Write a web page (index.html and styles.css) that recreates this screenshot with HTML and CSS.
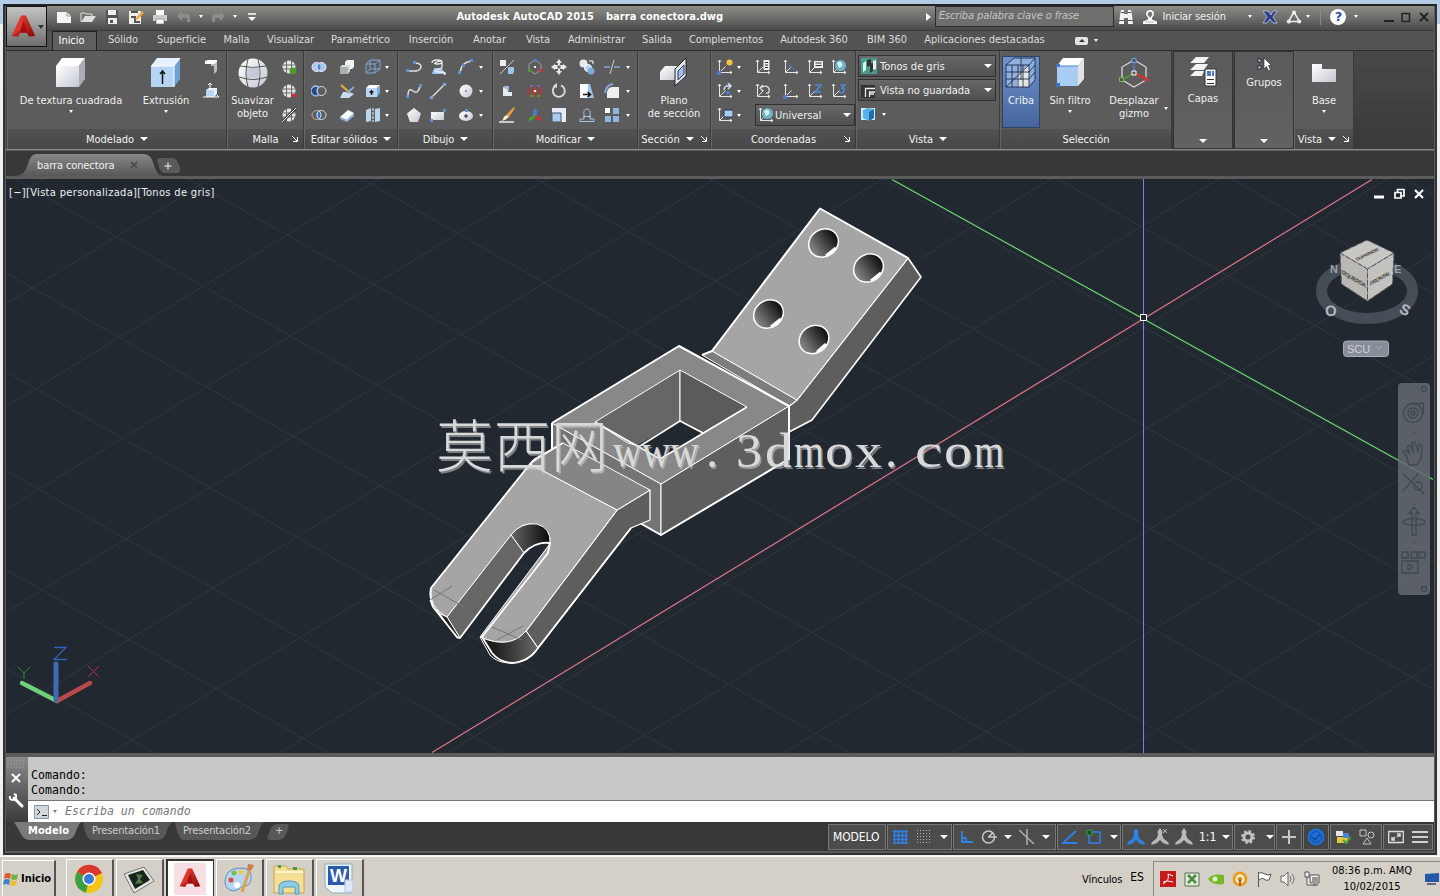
FILE: index.html
```html
<!DOCTYPE html>
<html lang="es">

<head>
  <meta charset="UTF-8">
  <title>Autodesk AutoCAD 2015 - barra conectora.dwg</title>
  <link rel="stylesheet" href="styles.css">
</head>

<body>
  <!-- shared symbols -->
  <svg class="defs" width="0" height="0">
    <defs>
      <linearGradient id="gWhite" x1="0" y1="0" x2="1" y2="1"><stop offset="0" stop-color="#fff"/><stop offset="1" stop-color="#c4c8d2"/></linearGradient>
      <linearGradient id="gRed" x1="0" y1="0" x2="1" y2="1"><stop offset="0" stop-color="#f0453a"/><stop offset="1" stop-color="#8d0a0a"/></linearGradient>
      <linearGradient id="gHole" x1="0" y1="0" x2="1" y2="0"><stop offset="0" stop-color="#8a8a8a"/><stop offset=".9" stop-color="#161616"/></linearGradient>
      <linearGradient id="gTip" x1="0" y1="0" x2="1" y2="0"><stop offset="0" stop-color="#111"/><stop offset=".3" stop-color="#222"/><stop offset="1" stop-color="#6a6a6a"/></linearGradient>
      <linearGradient id="gArc" x1="0" y1="0" x2="1" y2="0"><stop offset="0" stop-color="#666"/><stop offset="1" stop-color="#080808"/></linearGradient>
      <symbol id="ucs" viewBox="0 0 16 16"><path d="M2.500 1v12.500H15M2.500 13.500L8.500 7.500M1 3l1.500-2L4 3M13 12l2 1.500L13 15" fill="none" stroke="#e8e8e8"/></symbol>
      <symbol id="ball" viewBox="0 0 16 16"><circle cx="8" cy="8" r="6.500" fill="#e6e6e6"/><path d="M1.500 6h13M1.500 10h13M5.500 2v12M10.500 2v12" stroke="#6a6a6a" fill="none"/></symbol>
      <symbol id="logoA" viewBox="0 0 32 32"><path d="M13 2h6l12 26-8 1-3-5h-8l-3 5-8-1z" fill="url(#gRed)"/><path d="M16 9l5 15h-9z" fill="#a30f0f"/><path d="M13 2l3 7-5 12-10 7z" fill="#e83a33" opacity=".7"/></symbol>
      <symbol id="man" viewBox="0 0 18 18"><path d="M9 0l2.500 3.500L11 7l1.500 3.500 5 4v2.500l-5.500-2L9 12l-3 3-5.500 2v-2.500l5-4L7 7l-.5-3.500z"/></symbol>
    </defs>
  </svg>

  <div class="window">
    <div class="app-button"><svg width="25" height="27"><use href="#logoA"/></svg><i class="dd dark"></i></div>

    <div class="titlebar">
      <div class="quick">
        <svg class="ic" viewBox="0 0 16 16"><path d="M1 3h10l4 4v7H1z" fill="#f4f4f4"/><path d="M11 3v4h4" fill="none" stroke="#999"/></svg>
        <svg class="ic" viewBox="0 0 16 16"><path d="M1 13V4h4l1 1h6v2" fill="none" stroke="#ddd"/><path d="M1 13l4-6h11l-4 6z" fill="#ddd"/></svg>
        <svg class="ic" viewBox="0 0 16 16"><path d="M2 1h12v14H2z" fill="#555"/><path d="M4 1h8v5H4zM4 9h9v6H4z" fill="#eee"/><path d="M6 11h3v3H6z" fill="#555"/></svg>
        <svg class="ic" viewBox="0 0 16 16"><path d="M1 2h12v13H1z" fill="#eee"/><path d="M3 3h7M3 8h4v5h5" stroke="#555" stroke-width="2" fill="none"/><path d="M7 10l7-8 2 2-7 7z" fill="#f3a73c"/></svg>
        <svg class="ic" viewBox="0 0 16 16"><path d="M4 1h8v5H4z" fill="#fff"/><path d="M1 6h14v6H1z" fill="#ccc"/><path d="M4 10h8v5H4z" fill="#fff" stroke="#666" stroke-width=".6"/></svg>
        <svg class="ic" viewBox="0 0 16 16"><path d="M1 7l5-5v3h5q3 0 3 3v5h-3V9H6v3z" fill="#8c8c8c"/></svg>
        <i class="dd small"></i>
        <svg class="ic" viewBox="0 0 16 16"><path d="M15 7l-5-5v3H5Q2 5 2 8v5h3V9h5v3z" fill="#8c8c8c"/></svg>
        <i class="dd small"></i>
        <svg class="ic" viewBox="0 0 16 16"><path d="M4 5h8" stroke="#fff" stroke-width="1.500"/><path d="M4 8h8l-4 4z" fill="#fff"/></svg>
      </div>
      <div class="title"><span>Autodesk AutoCAD 2015</span><span>barra conectora.dwg</span></div>
      <i class="play"></i>
      <div class="search">Escriba palabra clave o frase</div>
      <div class="info">
        <svg class="ic" viewBox="0 0 16 16"><path d="M2 6l1-5h3v4h4V1h3l1 5 1 9h-5V9H6v6H1z" fill="#f2f2f2"/><path d="M1 11.500h5M10 11.500h5M3 3.500h3M10 3.500h3" stroke="#555"/></svg>
        <svg class="ic" viewBox="0 0 16 16"><path d="M8 1q4 0 4 4.500L10 9v1.500l5 2V15H1v-2.500l5-2V9L4 5.500Q4 1 8 1z" fill="#fff"/><path d="M8 3q2.500 0 2 3L8 8.500 6 6q-.5-3 2-3zM4 13h8" fill="#777" stroke="#777" stroke-width=".6"/></svg>
        <span>Iniciar sesión</span>
        <i class="dd small"></i>
        <svg class="ic" viewBox="0 0 16 16"><path d="M1 2h5l3 4 2-4h4l-4 6 4 6h-4l-3-4-3 4H1l4-6z" fill="#2d3f86" stroke="#bcc6ee" stroke-width=".8"/></svg>
        <svg class="ic tri" viewBox="0 0 16 16"><path d="M8 3L2.500 12.500h11z" fill="none" stroke="#eee" stroke-width="1.500"/><circle cx="8" cy="3.500" r="2" fill="#eee"/><circle cx="2.800" cy="12.500" r="2" fill="#eee"/><circle cx="13.200" cy="12.500" r="2" fill="#eee"/></svg>
        <i class="dd small"></i>
        <b class="bar"></b>
        <span class="help">?</span>
        <i class="dd small"></i>
      </div>
      <svg class="winbtns" width="52" height="16" viewBox="0 0 52 16"><path d="M2 12h10" stroke="#222" stroke-width="2"/><path d="M20 4v8.500h7.500V4.500H20" fill="none" stroke="#222" stroke-width="1.500"/><path d="M38 4l8 8M46 4l-8 8" stroke="#222" stroke-width="2"/></svg>
    </div>

    <div class="tabs">
      <span class="active">Inicio</span><span>Sólido</span><span>Superficie</span><span>Malla</span><span>Visualizar</span><span>Paramétrico</span><span>Inserción</span><span>Anotar</span><span>Vista</span><span>Administrar</span><span>Salida</span><span>Complementos</span><span>Autodesk 360</span><span>BIM 360</span><span>Aplicaciones destacadas</span>
      <span class="mini"><b></b><i class="dd small"></i></span>
    </div>

    <div class="ribbon">
      <section class="panel p-modelado">
        <div class="body">
          <div class="big wide"><svg width="32" height="32"><path d="M1 9l6-8h23l-6 8z" fill="#fff"/><path d="M1 9h23v21H1z" fill="url(#gWhite)"/><path d="M24 9l6-8v21l-6 8z" fill="#a9adb8"/></svg><span>De textura cuadrada</span><i class="dd small"></i></div>
          <div class="big ext"><svg width="32" height="32"><path d="M1 9l6-8h23l-6 8z" fill="#e6f2ff"/><path d="M1 9h23v21H1z" fill="#b6d5f5"/><path d="M24 9l6-8v21l-6 8z" fill="#6fa1d6"/><path d="M1 9h23v21M24 9l6-8" fill="none" stroke="#fff"/><path d="M12.500 27V14M10 17l2.500-3 2.500 3" fill="none" stroke="#111" stroke-width="1.500"/></svg><span>Extrusión</span><i class="dd small"></i></div>
          <div class="tools c1">
            <svg class="ic" viewBox="0 0 16 16"><path d="M2 2l3-1h9v2l-2 2H2z" fill="#fff"/><path d="M8 5h4l2-2v9l-3 3V7H8z" fill="#bdbdbd"/></svg>
            <svg class="ic" viewBox="0 0 16 16"><path d="M3 7h8v7H3z" fill="#b9d6f5"/><path d="M3 7l3-2h8l-3 2zM11 7l3-2v6l-3 3z" fill="#e9f3ff"/><path d="M7 6V0M5 2l2-2 2 2M0 14h16M14 12l2 2" stroke="#fff" fill="none"/></svg>
          </div>
        </div>
        <h3>Modelado <i class="dd"></i></h3>
      </section>

      <section class="panel p-malla">
        <div class="body">
          <div class="big sua"><svg width="32" height="32"><circle cx="16" cy="16" r="14.500" fill="url(#gWhite)"/><path d="M3 9q13 3 26 0M2 20q14 5 28 0M11 2q-4 14 0 28M21 2q4 14 0 28" fill="none" stroke="#555"/><path d="M10 10.500h13v10H10z" fill="#aab4c6" opacity=".5"/></svg><span>Suavizar<br>objeto</span></div>
          <div class="tools c1">
            <svg class="ic" viewBox="0 0 16 16"><use href="#ball"/><circle cx="12" cy="12" r="3.500" fill="#4d9b2c"/></svg>
            <svg class="ic" viewBox="0 0 16 16"><use href="#ball"/><path d="M10 11h6v3h-6z" fill="#b23a3a"/></svg>
            <svg class="ic" viewBox="0 0 16 16"><use href="#ball"/><path d="M1 15L15 1" stroke="#444" stroke-width="3"/><path d="M1 15L15 1" stroke="#eee"/></svg>
          </div>
        </div>
        <h3>Malla <svg class="launch" viewBox="0 0 8 8"><path d="M1 1l5 5M6.500 2v4.500H2" fill="none" stroke="#fff"/></svg></h3>
      </section>

      <section class="panel p-editar">
        <div class="body">
          <div class="tools">
            <svg class="ic" viewBox="0 0 16 16"><circle cx="5.500" cy="8" r="4.500" fill="#a8c8ee" stroke="#eef"/><circle cx="10.500" cy="8" r="4.500" fill="#a8c8ee" stroke="#eef"/><path d="M8 4.500q3 3.500 0 7-3-3.500 0-7" fill="#5a87c4"/></svg>
            <svg class="ic" viewBox="0 0 16 16"><path d="M6 3l2-2h7v7l-2 2H6z" fill="#f3f3f3"/><path d="M1 8h8v7H1z" fill="#a9b0ac"/><path d="M1 8l2-2h8L9 8zM9 8l2-2v6l-2 3z" fill="#d8dcd9"/></svg>
            <svg class="ic" viewBox="0 0 16 16"><path d="M1 5h9v9H1zM5 1h10v9H5zM1 5l4-4M10 5l5-4M10 14l5-4M1 14l4-4" fill="none" stroke="#7fa5d6"/></svg>
            <i class="dd small"></i>
            <svg class="ic" viewBox="0 0 16 16"><circle cx="10.500" cy="8" r="4.500" fill="none" stroke="#ddd"/><path d="M7.500 4a4.800 4.800 0 1 0 0 8q-3-4 0-8z" fill="#284a80" stroke="#9fc3f0" stroke-width="1.300"/></svg>
            <svg class="ic" viewBox="0 0 16 16"><path d="M1 15l3-6h6l5 2-5 4z" fill="#c7dbf2"/><path d="M2 2l9 8" stroke="#f0a83a" stroke-width="2"/><path d="M8 10l7-6" stroke="#7faadc" stroke-width="2"/></svg>
            <svg class="ic" viewBox="0 0 16 16"><path d="M1 5l3-3h11l-3 3z" fill="#fff"/><path d="M1 5h11v9H1z" fill="#b9d6f5"/><path d="M12 5l3-3v8l-3 4z" fill="#7faadc"/><path d="M6.500 12V7M4.500 9h4" stroke="#111" stroke-width="1.500"/></svg>
            <i class="dd small"></i>
            <svg class="ic" viewBox="0 0 16 16"><circle cx="5.500" cy="8" r="4.500" fill="none" stroke="#c9a89a"/><circle cx="10.500" cy="8" r="4.500" fill="none" stroke="#cdd"/><path d="M8 3.500q4 4.500 0 9-4-4.500 0-9" fill="#3f71b8" stroke="#bcd8f8"/></svg>
            <svg class="ic" viewBox="0 0 16 16"><path d="M1 10l8-7 6 3-7 7z" fill="#fff"/><path d="M1 10l7 3 7-7v3l-7 6-7-3z" fill="#8fb5e2"/></svg>
            <svg class="ic" viewBox="0 0 16 16"><path d="M1 3l5-2v13l-5 1zM10 2l5-1v13l-5 1z" fill="#b9d6f5"/><path d="M8 1v14" stroke="#fff" stroke-dasharray="3 1"/></svg>
            <i class="dd small"></i>
          </div>
        </div>
        <h3>Editar sólidos <i class="dd"></i></h3>
      </section>

      <section class="panel p-dibujo">
        <div class="body">
          <div class="tools">
            <svg class="ic" viewBox="0 0 16 16"><path d="M1 12h9q5-1 5-4.500T8 4" fill="none" stroke="#ddd" stroke-width="1.500"/><path d="M0 10h3v3H0zM7 2h3v3H7z" fill="#5c8fd6"/></svg>
            <svg class="ic" viewBox="0 0 16 16"><path d="M4 9h8l3 6H2z" fill="#9cc4ee"/><path d="M2 4q0-3 5-3t5 2-5 2 0-2 5 1 0 4-5 3 3 2 4 3" fill="none" stroke="#eee" stroke-width="1.300"/></svg>
            <svg class="ic" viewBox="0 0 16 16"><path d="M2 14Q3 3 14 2" fill="none" stroke="#ddd" stroke-width="1.500"/><path d="M0 12h3v3H0zM4 5h3v3H4zM12 0h3v3h-3z" fill="#5c8fd6"/></svg>
            <i class="dd small"></i>
            <svg class="ic" viewBox="0 0 16 16"><path d="M2 13Q2 4 7 8t7-5" fill="none" stroke="#ddd" stroke-width="1.500"/><path d="M0 12h3v3H0zM13 1h3v3h-3z" fill="#5c8fd6"/></svg>
            <svg class="ic" viewBox="0 0 16 16"><path d="M2 14L14 2" stroke="#ddd" stroke-width="1.500"/><path d="M0 13h3v3H0zM13 0h3v3h-3z" fill="#7fa5d6"/></svg>
            <svg class="ic" viewBox="0 0 16 16"><circle cx="8" cy="8" r="6.500" fill="url(#gWhite)"/><path d="M7 7h2v2H7z" fill="#99a"/></svg>
            <i class="dd small"></i>
            <svg class="ic" viewBox="0 0 16 16"><path d="M8 1l7 5.500L12 15H4L1 6.500z" fill="url(#gWhite)"/></svg>
            <svg class="ic" viewBox="0 0 16 16"><path d="M1 5h13v8H1z" fill="url(#gWhite)"/><path d="M0 12h3v3H0zM13 2h3v3h-3z" fill="#5c8fd6"/></svg>
            <svg class="ic" viewBox="0 0 16 16"><ellipse cx="8" cy="9" rx="7" ry="5" fill="url(#gWhite)"/><path d="M8 7v4M6 9h4" stroke="#223"/><path d="M7 2h3v3H7z" fill="#5c8fd6"/></svg>
            <i class="dd small"></i>
          </div>
        </div>
        <h3>Dibujo <i class="dd"></i></h3>
      </section>

      <section class="panel p-modificar">
        <div class="body">
          <div class="tools">
            <svg class="ic" viewBox="0 0 16 16"><path d="M1 1h6v6H1z" fill="#eee"/><path d="M9 9l1-1h5v5l-1 2H9z" fill="#9cc4ee"/><path d="M1 15L15 1" stroke="#ccc"/></svg>
            <svg class="ic" viewBox="0 0 16 16"><path d="M8 1l6 4v6l-6 4-6-4V5z" fill="none" stroke="#9a9a9a"/><path d="M6.500 0h3v3h-3z" fill="#4a7cd0"/><path d="M1 10h3v3H1z" fill="#4d9b2c"/><path d="M12 10h3v3h-3z" fill="#d33"/><path d="M7 7h2v2H7z" fill="#eee"/></svg>
            <svg class="ic" viewBox="0 0 16 16"><path d="M8 0l3 4H9v2h3V5l4 3-4 3v-1H9v2h2l-3 4-3-4h2v-2H4v1L0 8l4-3v1h3V4H5z" fill="#e8e8e8"/><path d="M6.500 6.500h3v3h-3z" fill="#666"/></svg>
            <svg class="ic" viewBox="0 0 16 16"><circle cx="4.500" cy="4.500" r="4" fill="#e8e8e8"/><circle cx="9" cy="9" r="3.500" fill="#b9d6f5" stroke="#fff"/><circle cx="12" cy="12" r="3.500" fill="#7faadc"/><path d="M10 2h4v3" fill="none" stroke="#fff"/></svg>
            <svg class="ic" viewBox="0 0 16 16"><path d="M0 8h6M10 8h6" stroke="#7fa5d6" stroke-width="1.500"/><path d="M6 15l4-14" stroke="#ccc"/></svg>
            <i class="dd small"></i>
            <svg class="ic" viewBox="0 0 16 16"><path d="M4 4h5v5h4v4H4z" fill="#e4e9f0"/><path d="M4 4l2-1h4v5" fill="#9cb8dc"/></svg>
            <svg class="ic" viewBox="0 0 16 16"><ellipse cx="8" cy="8" rx="7" ry="5" fill="none" stroke="#b33" stroke-width="1.500"/><path d="M3 3h3M10 3h3" stroke="#4a7cd0" stroke-width="2"/><path d="M3 13h4M10 13h3" stroke="#4d9b2c" stroke-width="2"/><circle cx="8" cy="8" r="2.500" fill="#d33"/><path d="M7 7h2v2H7z" fill="#fff"/></svg>
            <svg class="ic" viewBox="0 0 16 16"><path d="M10 2.300A6 6 0 1 1 5 2.600" fill="none" stroke="#ddd" stroke-width="1.800"/><path d="M6 0v5L2 3z" fill="#ddd"/></svg>
            <svg class="ic" viewBox="0 0 16 16"><path d="M1 1h8v14H1z" fill="#fff"/><path d="M9 1h2l4 14H9z" fill="#9cc4ee"/><path d="M4 11.500h7M8.500 9l3 2.500-3 2.500" stroke="#111" fill="none" stroke-width="1.500"/></svg>
            <svg class="ic" viewBox="0 0 16 16"><path d="M3 15V9q1-5 6-5h6v11z" fill="#eee"/><path d="M1 10Q2 2 9 1" fill="none" stroke="#7faadc" stroke-width="2"/></svg>
            <i class="dd small"></i>
            <svg class="ic" viewBox="0 0 16 16"><path d="M15 0l1 1-6 9-3-2z" fill="#e9a13a"/><path d="M7 8l3 2-4 3-4 1q2-1 3-4z" fill="#fff3cf"/><path d="M0 15h15" stroke="#eee" stroke-width="1.500"/></svg>
            <svg class="ic" viewBox="0 0 16 16"><path d="M8 1l2 3v5H6V4z" fill="#4a7cd0"/><path d="M7 8l1 3-3 2-4 1 1-3z" fill="#4d9b2c"/><path d="M9 8l-1 3 3 2 4 1-1-3z" fill="#c33"/></svg>
            <svg class="ic" viewBox="0 0 16 16"><path d="M1 1h14v14H1z" fill="#e4ecf7"/><path d="M1 6h9v9H1z" fill="#a9c9ee" stroke="#456"/></svg>
            <svg class="ic" viewBox="0 0 16 16"><path d="M1 14.500h14V12h-4V8q1-6-3-6T5 8v4H1zM4 9.500h8" fill="none" stroke="#a8c3e6"/></svg>
            <svg class="ic" viewBox="0 0 16 16"><path d="M1 1h5v5H1z" fill="#fff"/><path d="M9 1h6v6H9zM1 9h6v6H1zM9 9h6v6H9z" fill="#8fb5e2"/></svg>
            <i class="dd small"></i>
          </div>
        </div>
        <h3>Modificar <i class="dd"></i></h3>
      </section>

      <section class="panel p-seccion">
        <div class="body">
          <div class="big"><svg width="32" height="32"><path d="M2 15l5-6h13l-2 14H2z" fill="url(#gWhite)"/><path d="M17 12L28 1v18L17 29z" fill="#dfe6ef" stroke="#222"/><path d="M20 14l6-6v9l-6 6z" fill="#9fc0e8" stroke="#335"/></svg><span>Plano<br>de sección</span></div>
        </div>
        <h3>Sección <i class="dd"></i><svg class="launch" viewBox="0 0 8 8"><path d="M1 1l5 5M6.500 2v4.500H2" fill="none" stroke="#fff"/></svg></h3>
      </section>

      <section class="panel p-coord">
        <div class="body">
          <div class="tools">
            <svg class="ic" viewBox="0 0 16 16"><use href="#ucs"/><circle cx="12.500" cy="3.500" r="3" fill="#f8c34a"/><path d="M0 12h4v4H0z" fill="#4a7cd0"/></svg>
            <i class="dd small"></i>
            <svg class="ic" viewBox="0 0 16 16"><use href="#ucs"/><path d="M8.500 1h6v10h-6z" fill="#eee"/><path d="M10 3.500h3M10 6h3M10 8.500h3" stroke="#333"/></svg>
            <svg class="ic" viewBox="0 0 16 16"><use href="#ucs"/><path d="M4 4l8 8" stroke="#4a6ca8" stroke-width="1.500"/></svg>
            <svg class="ic" viewBox="0 0 16 16"><use href="#ucs"/><path d="M7 2h9v7H7z" fill="#eee"/><path d="M8.500 4h6M8.500 6.500h6" stroke="#333"/></svg>
            <svg class="ic" viewBox="0 0 16 16"><use href="#ucs"/><circle cx="9.500" cy="6.500" r="5.500" fill="#6fb3c4"/><path d="M6 4q3-3 5 0t-3 5z" fill="#d6f2f2"/></svg>
            <svg class="ic" viewBox="0 0 16 16"><use href="#ucs"/><path d="M7 7q0-5 6-4M11 0l3 3-3 3" fill="none" stroke="#cfe0f5" stroke-width="1.500"/><circle cx="11" cy="10" r="2" fill="#4a7cd0"/></svg>
            <i class="dd small"></i>
            <svg class="ic" viewBox="0 0 16 16"><use href="#ucs"/><path d="M5 5q8-4 9 1t-3 4M8 2L5 5l3 3" fill="none" stroke="#ddd" stroke-width="1.300"/></svg>
            <svg class="ic" viewBox="0 0 16 16"><use href="#ucs"/><path d="M0 12h4v4H0z" fill="#4a7cd0"/></svg>
            <svg class="ic" viewBox="0 0 16 16"><use href="#ucs"/><path d="M8 2h6L8 9h6" fill="none" stroke="#4f86d8" stroke-width="1.600"/></svg>
            <svg class="ic" viewBox="0 0 16 16"><use href="#ucs"/><path d="M9 2h5L11 5q3 0 2 3t-5 1" fill="none" stroke="#4f86d8" stroke-width="1.600"/></svg>
            <svg class="ic" viewBox="0 0 16 16"><use href="#ucs"/><path d="M7 3h9v7H7z" fill="#a9c9ee" stroke="#234"/></svg>
            <i class="dd small"></i>
            <div class="combo uni"><svg class="ic" viewBox="0 0 16 16"><use href="#ucs"/><circle cx="9.500" cy="6.500" r="5.500" fill="#6fb3c4"/><path d="M6 4q3-3 5 0t-3 5z" fill="#d6f2f2"/></svg><span>Universal</span><i class="dd"></i></div>
          </div>
        </div>
        <h3>Coordenadas <svg class="launch" viewBox="0 0 8 8"><path d="M1 1l5 5M6.500 2v4.500H2" fill="none" stroke="#fff"/></svg></h3>
      </section>

      <section class="panel p-vista">
        <div class="body col">
          <div class="combo"><svg class="ic" viewBox="0 0 16 16"><path d="M0 0h16v16H0z" fill="#4b9c8c"/><path d="M2 5l3-2v9l-3 2z" fill="#cfe"/><path d="M6 2l4-1v6l-4 2zM9 6l4-2v8l-4 3z" fill="#333"/><path d="M12 3l3-1v9l-3 1z" fill="#eee"/></svg><span>Tonos de gris</span><i class="dd"></i></div>
          <div class="combo"><svg class="ic" viewBox="0 0 16 16"><path d="M0 3h14v13H0z" fill="#333"/><path d="M4.500 15V6.500H14M8.500 15v-5H14M8.500 12H13" fill="none" stroke="#eee" stroke-width="1.300"/></svg><span>Vista no guardada</span><i class="dd"></i></div>
          <div class="cubeline"><svg class="ic" viewBox="0 0 16 16"><path d="M0 2h14v12H0z" fill="#d3ecfb"/><path d="M2 4l5-2 6 1v9l-5 3-6-3z" fill="#58b2e8"/><path d="M8 6l5-3v9l-5 3z" fill="#1f6fae"/></svg><i class="dd small"></i></div>
        </div>
        <h3>Vista <i class="dd"></i></h3>
      </section>

      <section class="panel p-seleccion">
        <div class="body">
          <div class="big criba"><svg width="32" height="32"><path d="M1 8l8-7h21v22l-6 7H1z" fill="#8fb0dc"/><path d="M12 17l12-9v22H12z" fill="#e5e5e5"/><path d="M1 8h23v22H1zM9 1h21v22M24 8l6-7M24 30l6-7M1 8l8-7M1 15h23l6-7M1 22h23l6-7M7 8v22M13 8v22M18 8v22M16 1v22M1 30L24 8" fill="none" stroke="#10203c" stroke-width=".8"/></svg><span>Criba</span></div>
          <div class="big filtro"><svg width="32" height="32"><path d="M3 9l6-8h21l-6 8z" fill="#fff"/><path d="M3 9h21v20H3z" fill="#a9cdf2"/><path d="M24 9l6-8v21l-6 7z" fill="#e3e3e3"/><path d="M2 26h4v4H2zM2 7h4v3H2z" fill="#3c74c4"/><path d="M4 9h20" stroke="#4a86cf"/></svg><span>Sin filtro</span><i class="dd small"></i></div>
          <div class="big gizmo"><svg width="32" height="32"><path d="M16 3l12 7v13l-12 7-12-7V10z" fill="none" stroke="#d8d8d8" stroke-width="1.300"/><path d="M16 16V4" stroke="#4a7cd0" stroke-width="1.500"/><path d="M16 16L4 23" stroke="#4d9b2c" stroke-width="2"/><path d="M16 16l12 6" stroke="#c33" stroke-width="2"/><path d="M14 1.500h4v4h-4z" fill="#555" stroke="#6aa0ee"/><path d="M1.500 20.500h4v4h-4z" fill="#555" stroke="#6ac040"/><path d="M27 19l5 5h-6z" fill="#d33"/><path d="M14 14h4v4h-4z" fill="#555" stroke="#fff"/></svg><span>Desplazar<br>gizmo</span></div>
          <i class="dd small giz"></i>
        </div>
        <h3>Selección</h3>
      </section>

      <section class="panel shut p-capas">
        <svg width="32" height="32"><path d="M9 1h13l-5 6H3zM9 8h12l-4 6H3zM8 15h9l-2 5H3z" fill="#f2f2f2"/><path d="M18 13h11v17H18z" fill="#fff" stroke="#333"/><path d="M20 15h4v5h-4zM25 15h2v5h-2z" fill="#4a7cd0"/><path d="M20 23.500h7M20 27.500h7" stroke="#333"/></svg><span>Capas</span><i class="dd"></i>
      </section>
      <section class="panel shut p-grupos">
        <svg class="ic" viewBox="0 0 16 16"><path d="M2 3h3v3H2zM2 10h3v3H2z" fill="#e3e8f2" stroke="#223"/><path d="M8 2v11l2.500-2.500 2 4.500 2-1-2-4.500h3z" fill="#fff" stroke="#222" stroke-width=".6"/></svg><span>Grupos</span><i class="dd"></i>
      </section>
      <section class="panel p-base">
        <div class="body">
          <div class="big"><svg width="32" height="32"><path d="M4 7h10v5h14v13H4z" fill="url(#gWhite)"/></svg><span>Base</span><i class="dd small"></i></div>
        </div>
        <h3>Vista <i class="dd"></i><svg class="launch" viewBox="0 0 8 8"><path d="M1 1l5 5M6.500 2v4.500H2" fill="none" stroke="#fff"/></svg></h3>
      </section>
    </div>

    <div class="filetabs">
      <svg width="240" height="25"><defs><linearGradient id="gTab" x1="0" y1="0" x2="0" y2="1"><stop offset="0" stop-color="#888"/><stop offset="1" stop-color="#585858"/></linearGradient></defs><path d="M10 25q9-1 12-12t9-10h107q7 0 10 11t9 11z" fill="url(#gTab)"/><path d="M151 9q0-2 3-2h13q4 0 7 10 1 5-3 5h-13q-4 0-7-13z" fill="#5a5a5a"/><path d="M158.500 15h7M162 11.500v7" stroke="#ccc" stroke-width="1.500"/><path d="M125 11l6 6M131 11l-6 6" stroke="#505050" stroke-width="2"/></svg>
      <span>barra conectora</span>
    </div>

    <div class="viewport">
      <svg class="scene" width="1427" height="574" viewBox="6 179 1427 574">
        <g id="grid" stroke="#2e3742" stroke-width="1"></g>
        <path d="M892 179.500L1433 479.500" stroke="#1d4a2c" stroke-width="2.500"/>
        <path d="M892 179.500L1433 479.500" stroke="#8fe08c"/>
        <path d="M1372 179.500L432 752.500" stroke="#5e2f3d" stroke-width="2"/>
        <path d="M1372 179.500L432 752.500" stroke="#e08c98"/>
        <path d="M1143 179h1v574h-1z" fill="#7a7cf0"/>
        <path d="M1140.500 314.500h6v6h-6z" fill="#212830" stroke="#fff"/>

        <!-- upper plate -->
        <g stroke="#fff" stroke-linejoin="round">
          <path d="M797 400L908 258l13 19-109 143-23 12V406z" fill="#5e5e5e" stroke-width="1.600"/>
          <path d="M702 355l10-4 85 49-8 6z" fill="#7d7d7d"/>
          <path d="M820 208.500l88 49.500-111 142-85-49z" fill="#a5a5a5"/>
          <path d="M702 355l10-4 108-142.500 88 49.500" fill="none" stroke-width="2"/>
          <g fill="url(#gHole)" stroke-width="1.500">
            <ellipse cx="823.500" cy="243" rx="15.500" ry="13.500" transform="rotate(-35 823.500 243)"/>
            <ellipse cx="868.500" cy="268" rx="15.500" ry="13.500" transform="rotate(-35 868.500 268)"/>
            <ellipse cx="768.500" cy="314" rx="15.500" ry="13.500" transform="rotate(-35 768.500 314)"/>
            <ellipse cx="814" cy="339.500" rx="15.500" ry="13.500" transform="rotate(-35 814 339.500)"/>
          </g>
          <path d="M826 256l10-8M871 281l10-8M771 327l10-8M817 352l9-8" stroke-width="3"/>
        </g>

        <!-- centre frame -->
        <g stroke="#fff" stroke-linejoin="round">
          <path d="M552 423l109 61v51l-109-60z" fill="#747474"/>
          <path d="M661 484l128-78v53l-128 76z" fill="#5e5e5e"/>
          <path d="M552 423l127-77 110 60-128 78z" fill="#888"/>
          <path d="M595 422l85-52v51l-40 25-12-3z" fill="#666"/>
          <path d="M680 370l67 37-44 26-23-12z" fill="#5b5b5b"/>
          <path d="M636 446l44-25 23 12-43 27z" fill="#212830" stroke="none"/>
          <path d="M640 446l40-25 23 12M595 422l65 37 87-52" fill="none" stroke-width="1.600"/>
          <path d="M552 423l127-77 110 60v53l-128 76-21-12M552 423v30" fill="none" stroke-width="2"/>
        </g>

        <!-- forked arm -->
        <g stroke="#fff" stroke-linejoin="round">
          <path d="M617 510l33-20v30l-19 8-93 120-12-17z" fill="#5e5e5e" stroke-width="1.300"/>
          <path d="M530 464l33-21 87 47-33 20z" fill="#858585"/>
          <path d="M530 464l87 46-91 121q-16 19-46 6l69-92q4-14-10-20-17-5-28 10l-64 82q-19-10-16-29z" fill="#a5a5a5"/>
          <path d="M511 535q10-13 26-11 14 4 13 19-14-2-26 10z" fill="url(#gArc)"/>
          <path d="M447 617l64-82 13 18-64 85z" fill="#666"/>
          <path d="M430 600q3 12 17 17l13 21h-3z" fill="#222"/>
          <path d="M480 637q30 13 46-6l12 17q-12 16-30 15-12-1-18-8z" fill="url(#gTip)"/>
          <path d="M563 443l-28 16-5 5-99 124q-2 9 2 19l24 30 3 1 64-85q12-12 26-10l-2 10-66 84 10 16q7 9 20 10 17-1 26-15l93-120" fill="none" stroke-width="1.800"/>
        </g>
        <path d="M434 590l30 17M430 600l22-14M492 627l30 13M497 640l26-14" stroke="#777" fill="none"/>

        <!-- ucs tripod -->
        <g stroke-linecap="round" stroke-width="4.500">
          <path d="M57 701L22 683" stroke="#6fd07a"/>
          <path d="M57 701l33-18" stroke="#b8494d"/>
          <path d="M56 700v-36" stroke="#3f6bb5" stroke-width="5"/>
        </g>
        <path d="M18 667l6 6 6-6M24 673v6" fill="none" stroke="#2f8b3c"/>
        <path d="M88 666l11 11M99 666l-11 11" stroke="#b03040"/>
        <path d="M54 647.500h12L54 659.500h13" fill="none" stroke="#2f62b8" stroke-width="1.300"/>

        <!-- view cube -->
        <ellipse cx="1367" cy="291" rx="45.500" ry="27.500" fill="none" stroke="#454d57" stroke-width="11"/>
        <g class="compass"><text x="1325" y="316" transform="rotate(-5 1331 310)">O</text><text x="1400" y="315" transform="rotate(28 1405 310)">S</text><text x="1330" y="273" class="far">N</text><text x="1394" y="273" class="far">E</text></g>
        <g stroke="#555" stroke-dasharray="5 2">
          <path d="M1340 253l27-13 27 13-26.500 16z" fill="#c9c7c3"/>
          <path d="M1340 253l27.500 16v32l-26-17z" fill="#bab8b4"/>
          <path d="M1394 253l-26.500 16v32l25-17z" fill="#c4c2be"/>
        </g>
        <g class="cube-text"><text transform="matrix(.8 -.38 .5 .6 1357 261)" textLength="28">SUPERIOR</text><text transform="matrix(.86 .5 0 1 1342 274)" textLength="28">IZQUIERDA</text><text transform="matrix(.86 -.48 0 1 1370 286)" textLength="24">FRONTAL</text></g>
        <rect x="1343.500" y="341" width="45" height="15.500" rx="3" fill="#888d9a" stroke="#a8acb6"/>
        <text x="1347" y="352.500" class="scu">SCU</text>
        <path d="M1376 346l3 3 3-3" fill="none" stroke="#a5aab5"/>

        <!-- watermark -->
        <g class="mark shadow" transform="translate(1.500 1.500)"><use href="#wm"/></g>
        <g class="mark"><g id="wm"><text x="436" y="467" class="cjk" textLength="172">莫西网</text><text x="613" y="467" textLength="86" lengthAdjust="spacingAndGlyphs">www</text><text x="706" y="467">.</text><text x="736" y="467" textLength="26" lengthAdjust="spacingAndGlyphs">3</text><text x="765" y="467" textLength="27" lengthAdjust="spacingAndGlyphs">d</text><text x="794" y="467" textLength="30" lengthAdjust="spacingAndGlyphs">m</text><text x="825" y="467" textLength="28" lengthAdjust="spacingAndGlyphs">o</text><text x="855" y="467" textLength="27" lengthAdjust="spacingAndGlyphs">x</text><text x="885" y="467">.</text><text x="915" y="467" textLength="27" lengthAdjust="spacingAndGlyphs">c</text><text x="944" y="467" textLength="28" lengthAdjust="spacingAndGlyphs">o</text><text x="974" y="467" textLength="30" lengthAdjust="spacingAndGlyphs">m</text></g></g>
      </svg>

      <div class="vp-label">[−][Vista personalizada][Tonos de gris]</div>
      <svg class="vp-btns" width="50" height="12"><path d="M0 9h10" stroke="#fff" stroke-width="3"/><path d="M21 4.500h6V10h-6zM23.500 4V1.500H30V8h-3" fill="none" stroke="#fff" stroke-width="1.700"/><path d="M41 2l8 8M49 2l-8 8" stroke="#fff" stroke-width="2.200"/></svg>
      <div class="navbar">
        <svg width="32" height="212" fill="none" stroke="#474e56" stroke-width="1.300"><circle cx="26" cy="6" r="2.500"/><circle cx="15" cy="30" r="9.500"/><circle cx="15" cy="30" r="5"/><circle cx="15" cy="30" r="2"/><path d="M15 20.500h10.500V31M9 74l-4-6 3-1 4 4-3-8 3-1 4 8-2-10 3-1 3 10 1-8 3 1-1 13-4 7h-8zM5 91l18 17M20 91L5 108M22 106l4 5"/><circle cx="20" cy="103" r="4"/><ellipse cx="16" cy="139" rx="11" ry="3.500"/><path d="M14 152v-22h-3l5-6 5 6h-3v22z"/><path d="M4 169h6v6H4zM13 169h6v6h-6zM21 169h6v6h-6zM4 178h16v12H4z"/><path d="M10 181l5 3-5 3zM16 49v2M16 120v2M16 158v2"/><circle cx="26" cy="206" r="2.500"/></svg>
      </div>
    </div>

    <div class="command">
      <div class="grip"><svg width="21" height="64"><path d="M1 4h18M1 7h18M1 10h18" stroke="#999" stroke-dasharray="2 1"/><path d="M6 17l8 8M14 17l-8 8" stroke="#fff" stroke-width="2"/><path d="M8 41l8 8" stroke="#fff" stroke-width="3" stroke-linecap="round"/><path d="M4 39q-1 4 3 4t3-5L8 37" fill="none" stroke="#fff" stroke-width="2"/></svg></div>
      <div class="lines">
        <p>Comando:</p>
        <p>Comando:</p>
        <div class="entry"><svg width="16" height="14"><path d="M.5.5h14v13H.5z" fill="#cfd6dc" stroke="#8a949c"/><path d="M3 4l3 3-3 3M8 10.500h5" fill="none" stroke="#222"/></svg><i class="dd small gray"></i><em>Escriba un comando</em></div>
      </div>
    </div>

    <div class="bottom">
      <div class="layouts">
        <svg width="290" height="20"><path d="M8 0h68q-3 0-7 12-3 6-9 6H24q-6 0-9-6T8 0z" fill="#7a7a7a"/><path d="M77 0h90q-4 0-7 12-3 6-8 6H86q-6 0-9-18zM169 0h90q-4 0-7 12-3 6-8 6h-66q-6 0-9-18zM262 14q3-12 9-12h9q4 0 2 5-3 11-9 11h-9q-4 0-2-4z" fill="#585858"/></svg>
        <span class="on">Modelo</span><span>Presentación1</span><span>Presentación2</span><span class="plus">+</span>
      </div>
      <div class="status">
        <div class="seg s1">MODELO</div>
        <div class="seg s2">
          <svg class="ic" viewBox="0 0 16 16"><path d="M2.500 1v14M6.500 1v14M10.500 1v14M14 1v14M1 2.500h15M1 6.500h15M1 10.500h15M1 14h15" stroke="#2f80e8" stroke-width="1.500"/></svg>
          <svg class="ic" viewBox="0 0 16 16"><path d="M1 1.500h15M1 4.500h15M1 7.500h15M1 10.500h15M1 13.500h15" stroke="#b5b5b5" stroke-dasharray="1 2"/></svg><i class="dd"></i></div>
        <div class="seg s3">
          <svg class="ic" viewBox="0 0 16 16"><path d="M4 2v11h11M4 9h4v4" fill="none" stroke="#2f80e8" stroke-width="1.800"/></svg>
          <svg class="ic" viewBox="0 0 16 16"><circle cx="7.500" cy="8" r="6" fill="none" stroke="#c8c8c8" stroke-width="1.500"/><path d="M7 8h9M8 7.500l4-4" stroke="#c8c8c8" stroke-width="1.500"/></svg><i class="dd"></i>
          <svg class="ic" viewBox="0 0 16 16"><path d="M0 1l15 14M8 0v16" stroke="#aaa" stroke-width="1.600"/></svg><i class="dd"></i></div>
        <div class="seg s4">
          <svg class="ic" viewBox="0 0 16 16"><path d="M0 14h15M2 13L14 2" stroke="#2f80e8" stroke-width="1.800"/></svg>
          <svg class="ic" viewBox="0 0 16 16"><path d="M3 3h11v11H3z" fill="none" stroke="#2f80e8" stroke-width="1.500"/><path d="M1 1h5v5H1z" fill="#1c4f20" stroke="#2fa13d"/></svg><i class="dd"></i></div>
        <div class="seg s5">
          <svg width="18" height="18" fill="#2f80e8"><use href="#man"/></svg><svg width="18" height="18" fill="#b8b8b8"><use href="#man"/><path d="M12 1l4 4M16 1l-4 4" stroke="#b8b8b8"/></svg><svg width="18" height="18" fill="#b8b8b8"><use href="#man"/></svg><span>1:1</span><i class="dd"></i></div>
        <div class="seg s6"><svg class="ic" viewBox="0 0 16 16"><circle cx="8" cy="8" r="4" fill="none" stroke="#c0c0c0" stroke-width="3"/><circle cx="8" cy="8" r="6" fill="none" stroke="#c0c0c0" stroke-width="2" stroke-dasharray="2.500 2.200"/></svg><i class="dd"></i></div>
        <div class="seg s7"><svg class="ic" viewBox="0 0 16 16"><path d="M8 1v14M1 8h14" stroke="#c8c8c8" stroke-width="2"/></svg></div>
        <div class="seg s8"><svg width="18" height="18"><circle cx="9" cy="9" r="8.500" fill="#1d6fd6"/><circle cx="9" cy="9" r="5.500" fill="none" stroke="#0f4a9c"/><path d="M5 9l3 3 5-6" fill="none" stroke="#0f4a9c" stroke-width="1.500"/></svg></div>
        <div class="seg s9">
          <svg class="ic" viewBox="0 0 16 16"><path d="M1 2h7v5H1z" fill="#e8e8e8"/><path d="M2 8h11v6H2z" fill="#e7c93c"/><path d="M8 4h6v5H8z" fill="#4a86cf"/><path d="M8 11l3 3 5-6" fill="none" stroke="#45a13a" stroke-width="2"/></svg>
          <svg class="ic" viewBox="0 0 16 16"><path d="M1 1h6v6H1zM8 9l4 6H4z" fill="none" stroke="#c8c8c8"/><circle cx="12" cy="6" r="3" fill="none" stroke="#c8c8c8"/></svg></div>
        <div class="seg s10">
          <svg class="ic" viewBox="0 0 16 16"><path d="M.7 2.500h14.600v11H.700z" fill="none" stroke="#ddd" stroke-width="1.300"/><path d="M4 11l3-3M12 5L9 8M4 8v3h3M12 8V5H9" fill="none" stroke="#ddd" stroke-width="1.500"/></svg>
          <svg class="ic" viewBox="0 0 16 16"><path d="M0 3h16M0 8h16M0 13h16" stroke="#d0d0d0" stroke-width="2"/></svg></div>
      </div>
    </div>
  </div>

  <div class="taskbar">
    <div class="start"><svg width="17" height="16"><path d="M2 3q3-2 6 0L7 8Q4 6 1 8z" fill="#e2572b"/><path d="M9 3q3 2 6 0l-1 5q-3 2-6 0z" fill="#6db33f"/><path d="M1 9q3-2 6 0l-1 5q-3-2-6 0z" fill="#3d7fd0"/><path d="M8 9q3 2 6 0l-1 5q-3 2-6 0z" fill="#f2bf2c"/></svg>Inicio</div>
    <div class="task"><svg width="32" height="32"><circle cx="16" cy="16" r="14" fill="#f5c518"/><path d="M16 16L4 9A14 14 0 0 1 29 10z" fill="#da3a2e"/><path d="M16 16L4 9a14 14 0 0 0 9 20.700z" fill="#3f9f46"/><circle cx="16" cy="16" r="6.500" fill="#fff"/><circle cx="16" cy="16" r="5" fill="#3b78d8"/></svg></div>
    <div class="task"><svg width="32" height="32"><path d="M1 11l20-7 10 14-20 12z" fill="#e4e4e4" stroke="#777"/><path d="M5 12l15-5 7 10-15 9z" fill="#17241a"/><path d="M13 11l7 1-3 4 3 4-8 1 3-5z" fill="#4f7a46"/></svg></div>
    <div class="task on"><svg width="32" height="32"><path d="M0 0h32v32H0z" fill="#f6dfe2"/><use href="#logoA" x="5" y="3" width="22" height="24"/></svg></div>
    <div class="task"><svg width="32" height="32"><path d="M2 19Q2 6 16 5t12 12q-2 7-8 6-4 4-9 5-9-1-9-9z" fill="#b7d5ee" stroke="#5b8fc0"/><circle cx="8" cy="17" r="2.500" fill="#d94a3d"/><circle cx="11" cy="10" r="2.500" fill="#7cb84a"/><circle cx="18" cy="9" r="2.500" fill="#f1cf3c"/><circle cx="14" cy="22" r="3" fill="#fff"/><path d="M28 2l-9 27" stroke="#e0a14c" stroke-width="3"/><path d="M25 1l6 1-3 6-4-1z" fill="#c97f4a"/></svg></div>
    <div class="task"><svg width="32" height="32"><path d="M1 3h12l2 3h16v24H1z" fill="#f4df94" stroke="#c9a84a"/><path d="M3 9h27" stroke="#fff6cf" stroke-width="2"/><path d="M6 31v-8q1-5 10-5t10 5v8h-4v-7H10v7z" fill="#8fcbe6" stroke="#4c9cc4"/><path d="M5 2h3v3H5zM20 4h4v3h-4z" fill="#4a9a4a"/></svg></div>
    <div class="task"><svg width="32" height="32"><path d="M2 1h27v29H9L2 24z" fill="#eef5fc" stroke="#8ab"/><path d="M5 3h21v19H5z" fill="#2b5ca8"/><text x="7" y="19" class="word">W</text><path d="M22 17h8v12h-8z" fill="#dce8f6" stroke="#b4c8de"/></svg></div>
    <div class="right"><span class="vinc">Vínculos</span><span class="lang">ES</span></div>
    <div class="tray">
      <svg class="ic" viewBox="0 0 16 16"><path d="M0 0h16v16H0z" fill="#c61a1a"/><path d="M3 13q7-4 5-10M3 11q4-2 10 0M8 3l5 2" fill="none" stroke="#fff"/></svg>
      <svg class="ic" viewBox="0 0 16 16"><path d="M1 2h14v13H1z" fill="#e2e8dc" stroke="#55704e"/><path d="M4 4l8 8M12 4l-8 8" stroke="#4c8a3c" stroke-width="2.500"/></svg>
      <svg class="ic" viewBox="0 0 16 16"><path d="M0 8q4-6 16-4v9Q5 15 0 8z" fill="#76b82a"/><circle cx="7" cy="8" r="2.500" fill="#dff0c8"/></svg>
      <svg class="ic" viewBox="0 0 16 16"><circle cx="8" cy="8" r="7.500" fill="#e8a024"/><circle cx="8" cy="8" r="3.500" fill="none" stroke="#fff" stroke-width="1.800"/><path d="M8 8v7" stroke="#b35a14" stroke-width="2"/></svg>
      <svg class="ic" viewBox="0 0 16 16"><path d="M2.500 1v15M3 2q3-1 6 1t6 0l-2 6q-3 1-5-1T3 9" fill="#fff" stroke="#555"/></svg>
      <svg class="ic" viewBox="0 0 16 16"><path d="M1 5h3l4-4v14l-4-4H1z" fill="#f4f4f4" stroke="#666"/><path d="M10 5q2 3 0 6M12 3q4 5 0 10" fill="none" stroke="#777"/></svg>
      <svg class="ic" viewBox="0 0 16 16"><path d="M6 4h9v8H6zM1 1h4v5H1zM3 6v8h9M9 14h5" fill="#f2f2f2" stroke="#555"/><path d="M8 6h6v5H8z" fill="#999"/></svg>
      <div class="clock">08:36 p.m. AMQ<br>10/02/2015</div>
      <svg class="ic" viewBox="0 0 16 16"><path d="M1 3l14-1v9H1z" fill="#2559a8"/><path d="M3 13h9" stroke="#668" stroke-width="2"/></svg>
    </div>
  </div>

  <script>
    // drawing grid: two families of parallel lines through (216, 689)
    const a = [83.8, -51.2], b = [87, 49.5], o = [216, 689];
    const grid = document.getElementById('grid');
    let lines = '';
    function line(p, v) {
      lines += `<line x1="${p[0] - v[0] * 20}" y1="${p[1] - v[1] * 20}" x2="${p[0] + v[0] * 20}" y2="${p[1] + v[1] * 20}"/>`;
    }
    for (let i = -12; i < 20; i++) {
      line([o[0] + a[0] * i, o[1] + a[1] * i], b);
      line([o[0] + b[0] * i, o[1] + b[1] * i], a);
    }
    grid.innerHTML = lines;
  </script>
</body>

</html>
```
FILE: styles.css
```css
* {
  box-sizing: border-box;
  margin: 0;
  padding: 0;
}

body {
  width: 1440px;
  height: 896px;
  overflow: hidden;
  background: linear-gradient(#b5cbe4 0, #b5cbe4 24px, #eef0f2 24px);
  font-family: "DejaVu Sans Condensed", "DejaVu Sans", sans-serif;
  font-size: 11px;
  color: #f0f0f0;
  padding: 4px 3px 0;
}

.defs {
  position: absolute;
}

svg {
  display: block;
  flex: none;
}

.ic {
  width: 16px;
  height: 16px;
}

.dd {
  display: block;
  flex: none;
  width: 0;
  height: 0;
  border: 4px solid transparent;
  border-top: 4px solid #fff;
  border-bottom: 0;
}

.dd.small {
  border-width: 3px 2.5px 0;
}

.dd.dark {
  border-width: 4px 3px 0;
  border-top-color: #333;
}

.dd.gray {
  border-top-color: #777;
}

.window {
  position: relative;
  height: 851px;
  background: #5b5b5b;
  border: 2px solid #333;
  border-top: 2px solid #222;
  padding: 0 1px;
  display: flex;
  flex-direction: column;
}

.app-button {
  position: absolute;
  left: 1px;
  top: 0;
  width: 41px;
  height: 41px;
  background: linear-gradient(#c4c4c4, #6e6e6e);
  border: 1px solid #111;
  display: flex;
  align-items: center;
  padding-left: 4px;
  gap: 2px;
  z-index: 2;
}

/* title bar */
.titlebar {
  height: 24px;
  background: linear-gradient(#8b8b87, #6d6d6b 50%, #4a4a4a);
  display: flex;
  align-items: center;
  flex: none;
  padding-bottom: 3px;
}

.quick {
  display: flex;
  align-items: center;
  width: 451px;
  padding-left: 50px;
  gap: 8px;
}

.quick .dd {
  margin: 0 -1px;
}

.title {
  width: 470px;
  display: flex;
  gap: 12px;
  font-weight: bold;
  color: #fff;
  letter-spacing: .06px;
}

.play {
  border: 4px solid transparent;
  border-left: 5px solid #fff;
  border-right: 0;
  margin-right: 4px;
}

.search {
  width: 180px;
  height: 21px;
  border: 1px solid #2c2c2c;
  background: #6e6e6d;
  color: #c4c4c4;
  font-style: italic;
  line-height: 18px;
  padding-left: 3px;
  letter-spacing: -.1px;
}

.info {
  width: 264px;
  padding-left: 4px;
  display: flex;
  align-items: center;
}

.info > svg + svg {
  margin-left: 8px;
}

.info span:not(.help) {
  margin-left: 4px;
  width: 86px;
  letter-spacing: -.1px;
}

.info svg.tri {
  margin-right: 4px;
}

.info .dd + svg {
  margin-left: 10px;
}

.bar {
  width: 1px;
  height: 16px;
  background: #888;
  margin: 0 9px 0 10px;
}

.help {
  width: 16px;
  height: 16px;
  border-radius: 50%;
  background: #fff;
  color: #2b4f9a;
  font: bold 13px/16px "DejaVu Sans", sans-serif;
  text-align: center;
  margin-right: 8px;
}

.winbtns {
  margin-left: 4px;
}

/* ribbon tabs */
.tabs {
  height: 21px;
  flex: none;
  background: #535353;
  border-top: 1px solid #3a3a3a;
  border-bottom: 1px solid #2e2e2e;
  padding-left: 46px;
  display: grid;
  grid-template-columns: 45px 52px 65px 45px 63px 77px 64px 53px 44px 73px 48px 90px 86px 60px 135px 70px;
  text-align: center;
  line-height: 18px;
  color: #dcdcdc;
  letter-spacing: -.05px;
}

.tabs span {
  white-space: nowrap;
  height: 19px;
}

.tabs .active {
  background: #606060;
  border: 1px solid #222;
  border-bottom: 0;
  line-height: 17px;
  padding-right: 6px;
  color: #fff;
}

.tabs .mini {
  display: flex;
  align-items: center;
  gap: 6px;
  padding-left: 23px;
}

.mini b {
  width: 13px;
  height: 8px;
  border-radius: 2px;
  background: #e4e4e4;
  display: flex;
  justify-content: center;
}

.mini b::before {
  content: "";
  border: 3px solid transparent;
  border-bottom-color: #333;
  border-top: 0;
  height: 0;
  margin-top: 2px;
}

/* ribbon */
.ribbon {
  height: 99px;
  flex: none;
  background: linear-gradient(#484848, #3a3a3a);
  border-bottom: 1px solid #8a8a8a;
  display: flex;
  padding-left: 1px;
}

.panel {
  display: flex;
  flex-direction: column;
  background: #5c5c5c;
  border-right: 1px solid #3b3b3b;
  border-left: 1px solid #666;
  flex: none;
}

.panel .body {
  height: 78px;
  display: flex;
  padding-top: 5px;
}

.panel h3 {
  height: 20px;
  font-size: 11px;
  font-weight: normal;
  background: linear-gradient(#525252, #474747);
  display: flex;
  align-items: center;
  justify-content: center;
  gap: 6px;
  color: #f4f4f4;
  position: relative;
}

.launch {
  width: 8px;
  height: 8px;
}

.big {
  display: flex;
  flex-direction: column;
  align-items: center;
  text-align: center;
  line-height: 13px;
  white-space: nowrap;
}

.big svg {
  margin-top: 1px;
}

.big span {
  margin-top: 5px;
}

.big .dd {
  margin-top: 3px;
}

.tools {
  display: grid;
  grid-auto-rows: 24px;
  align-items: center;
  align-content: start;
  margin-top: -1px;
}

.p-modelado { width: 220px; }
.p-modelado .big { width: 126px; }
.p-modelado .ext { width: 64px; }
.p-modelado .tools { margin-left: 5px; }

.p-malla { width: 77px; }
.p-malla .big { width: 49px; }
.p-malla .tools { margin-left: 4px; }
.p-malla .launch, .p-coord .launch {
  position: absolute;
  right: 4px;
}

.p-editar { width: 94px; }
.p-editar .tools {
  grid-template-columns: 28px 26px 20px 6px;
  margin-left: 6px;
}

.p-dibujo { width: 95px; }
.p-dibujo .tools {
  grid-template-columns: 24px 28px 21px 6px;
  margin-left: 7px;
}

.p-modificar { width: 145px; }
.p-modificar .tools {
  grid-template-columns: 28px 24px 28px 25px 22px 6px;
  margin-left: 5px;
}

.p-seccion { width: 73px; }
.p-seccion .big { width: 70px; }

.p-coord { width: 145px; }
.p-coord .tools {
  grid-template-columns: 20px 18px 28px 24px 24px 20px;
  margin-left: 5px;
}

.combo {
  display: flex;
  align-items: center;
  height: 22px;
  border: 1px solid #303030;
  background: linear-gradient(#686868, #505050);
  padding: 0 3px 0 2px;
  gap: 3px;
  white-space: nowrap;
}

.combo .dd {
  margin-left: auto;
}

.combo.uni {
  grid-column: 3 / span 4;
  width: 100px;
  gap: 1px;
}

.p-vista { width: 144px; }
.p-vista .col {
  flex-direction: column;
  padding: 4px 3px 0 1px;
  gap: 2px;
}

.cubeline {
  display: flex;
  align-items: center;
  gap: 5px;
  margin: 3px 0 0 3px;
}

.p-seleccion { width: 172px; }
.criba {
  width: 38px;
  height: 72px;
  margin-left: 1px;
  background: linear-gradient(#6f93cb, #46659c);
  border: 1px solid #2f4468;
}

.criba svg {
  margin-top: 0;
}

.filtro { width: 60px; }
.gizmo { width: 68px; }
.p-seleccion .giz {
  margin-top: 51px;
  margin-left: -4px;
}

.shut {
  align-items: center;
  background: linear-gradient(#5a5a5a, #626262);
  border: 1px solid #333;
  padding-top: 4px;
  margin-left: 1px;
}

.shut > .dd {
  margin-top: auto;
  margin-bottom: 5px;
}

.p-capas { width: 60px; }
.p-capas span { margin-top: 4px; }
.p-grupos { width: 60px; }
.p-grupos span { margin-top: 4px; }
.p-base { width: 60px; }
.p-base .big { width: 58px; }

/* drawing tabs */
.filetabs {
  height: 25px;
  flex: none;
  background: #383838;
  display: flex;
  position: relative;
  margin-top: 1px;
}

.filetabs span {
  position: absolute;
  left: 31px;
  top: 8px;
  letter-spacing: -.1px;
}

/* viewport */
.viewport {
  margin-top: 3px;
  height: 574px;
  flex: none;
  background: #212830;
  position: relative;
}

.vp-label {
  position: absolute;
  left: 3px;
  top: 7px;
  letter-spacing: .33px;
}

.vp-btns {
  position: absolute;
  right: 10px;
  top: 9px;
}

.compass text {
  font: bold 15px "Liberation Sans", sans-serif;
  fill: #b4b8be;
}

.compass .far {
  font-size: 11px;
  fill: #9aa0a8;
}

.cube-text text {
  font: bold 6px "Liberation Sans", sans-serif;
  fill: #444;
}

.scu {
  font: 11px "Liberation Sans", sans-serif;
  fill: #ccd0d8;
}

.mark text {
  font: 49px "Liberation Serif", serif;
  fill: #d9d9d9;
}

.mark .cjk {
  font: 300 57px "Noto Sans CJK SC", sans-serif;
}

.mark.shadow {
  opacity: .5;
}

.navbar {
  position: absolute;
  right: 4px;
  top: 204px;
  width: 32px;
  height: 212px;
  border-radius: 4px;
  background: #646a70;
  opacity: .85;
}

/* command line */
.command {
  margin-top: 4px;
  height: 65px;
  flex: none;
  display: flex;
}

.grip {
  width: 22px;
  background: linear-gradient(#8a8a8a, #3b3b3b);
}

.lines {
  flex: 1;
  background: #c8c8c8;
  color: #000;
  padding-top: 11px;
  font: 11.6px/15px "DejaVu Sans Mono", monospace;
}

.lines p {
  padding-left: 3px;
}

.entry {
  display: flex;
  align-items: center;
  height: 22px;
  margin-top: 2px;
  border-top: 1px solid #777;
  background: #fff;
  padding-left: 6px;
}

.entry .dd {
  margin: 0 8px 0 3px;
}

.entry em {
  color: #777;
}

/* layout tabs and status bar */
.bottom {
  height: 29px;
  flex: none;
  background: #383838;
  display: flex;
  justify-content: space-between;
}

.layouts {
  position: relative;
  width: 300px;
  display: flex;
  padding-left: 22px;
  line-height: 18px;
  color: #ccc;
}

.layouts svg {
  position: absolute;
  left: 0;
  top: 0;
}

.layouts span {
  position: relative;
  flex: none;
  width: 91px;
  letter-spacing: -.15px;
}

.layouts .on {
  width: 64px;
  font-weight: bold;
  color: #fff;
  letter-spacing: .1px;
}

.layouts .plus {
  width: 20px;
  padding-left: 1px;
}

.status {
  display: flex;
  align-items: center;
  gap: 1px;
  padding-right: 1px;
}

.seg {
  height: 26px;
  border: 1px solid #777;
  background: #4c4c4c;
  display: flex;
  align-items: center;
  padding-left: 4px;
}

.s1 { width: 58px; color: #fff; font-size: 12px; }
.s2 { width: 65px; gap: 8px; }
.s3 { width: 103px; gap: 7px; }
.s4 { width: 64px; gap: 8px; }
.s5 { width: 111px; gap: 6px; }
.s6 { width: 41px; gap: 10px; padding-left: 5px; }
.s7 { width: 26px; }
.s8 { width: 26px; padding-left: 3px; background: #444; }
.s9 { width: 52px; gap: 8px; }
.s10 { width: 50px; gap: 8px; }

.s1 {
  letter-spacing: -.1px;
}

.s5 span {
  color: #fff;
  font-size: 12px;
}

/* taskbar */
.taskbar {
  margin: 1px -3px 0;
  height: 41px;
  background: #d4d0c8;
  border-top: 1px solid #fff;
  display: flex;
  color: #000;
}

.start {
  width: 54px;
  margin: 3px 10px 0 2px;
  border: 1px solid #fff;
  border-right: 2px solid #555;
  font-weight: bold;
  display: flex;
  align-items: center;
  gap: 1px;
}

.task {
  width: 48px;
  margin-right: 2px;
  margin-top: 2px;
  border: 1px solid #fff;
  border-right: 2px solid #555;
  padding: 3px 0 0 6px;
}

.task.on {
  background: #fff;
  border: 1px solid #333;
  border-width: 2px 1px 1px 2px;
  padding-top: 2px;
}

.word {
  font: bold 18px "Liberation Sans", sans-serif;
  fill: #fff;
}

.right {
  margin-left: auto;
  display: flex;
  width: 71px;
  gap: 8px;
}

.vinc {
  padding-top: 16px;
  letter-spacing: -.15px;
}

.lang {
  padding-top: 13px;
  font-size: 12px;
}

.tray {
  width: 287px;
  margin-top: 4px;
  border-left: 1px solid #888;
  border-top: 1px solid #888;
  display: flex;
  align-items: center;
  gap: 8px;
  padding-left: 6px;
  padding-bottom: 2px;
}

.clock {
  width: 92px;
  text-align: center;
  line-height: 16px;
  font-size: 11px;
  white-space: nowrap;
}
```
